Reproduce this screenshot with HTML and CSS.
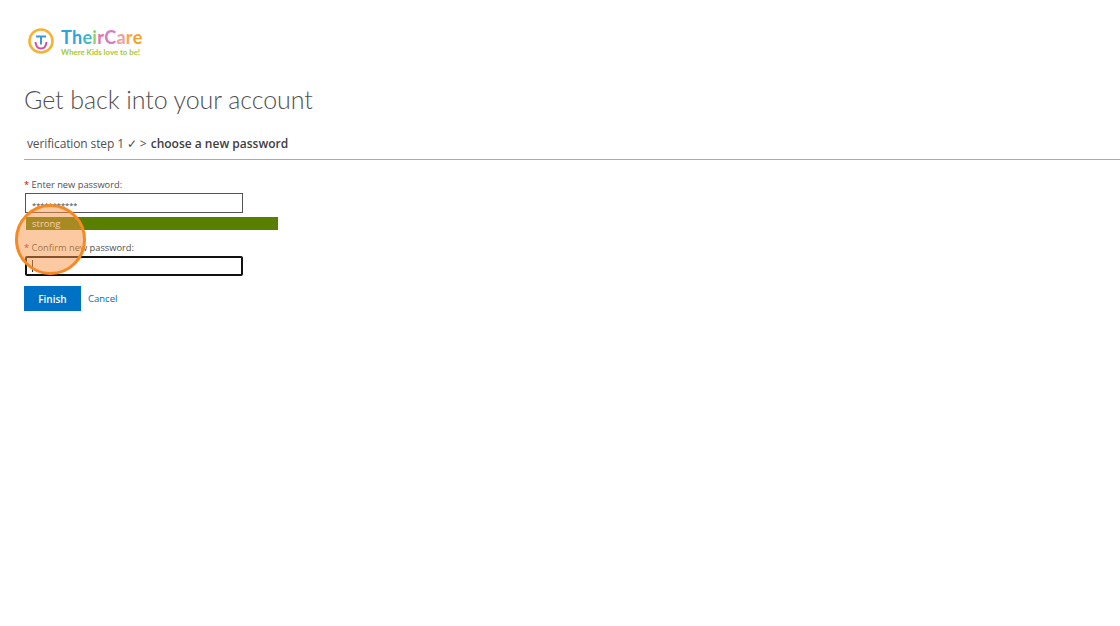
FILE: index.html
```html
<!DOCTYPE html>
<html lang="en">
<head>
    <meta charset="UTF-8">
    <title>Get back into your account</title>
    <link rel="stylesheet" href="styles.css">
</head>
<body>

<div class="container">
    <div class="logo">
        <svg class="logo-icon" width="28" height="28" viewBox="0 0 28 28">
            <circle cx="14" cy="14" r="11.5" fill="none" stroke="#f5b335" stroke-width="2.6"/>
            <path d="M9 9.500h10M14 9.500v8" fill="none" stroke="#3a9ad0" stroke-width="2"/>
            <path d="M8.500 15c.5 5 3 6.500 5.500 6.500s5-1.500 5.500-6.500" fill="none" stroke="#d24fa0" stroke-width="2"/>
        </svg>
        <div class="logo-text">
            <div class="logo-name"><span class="c1">Th</span><span class="c2">e</span><span class="c3">i</span><span class="c4">r</span><span class="c5">C</span><span class="c6">a</span><span class="c7">r</span><span class="c8">e</span></div>
            <div class="logo-tag">Where Kids love to be!</div>
        </div>
    </div>

    <h1 class="title">Get back into your account</h1>

    <div class="steps">
        <span class="step-done">verification step 1 ✓ &gt;</span> <b>choose a new password</b>
    </div>

    <form class="form">
        <label class="field-label" for="txtNew"><span class="req">*</span> Enter new password:</label>
        <div class="input fake-pass" id="txtNew">***********</div>
        <div class="strength">strong</div>

        <label class="field-label second" for="txtConfirm"><span class="req">*</span> Confirm new password:</label>
        <div class="input focused" id="txtConfirm"><i class="caret"></i></div>

        <div class="actions">
            <button type="button" class="btn-finish">Finish</button>
            <a class="cancel" href="#">Cancel</a>
        </div>
    </form>
</div>

<div class="highlight"></div>
</body>
</html>
```

FILE: styles.css
```css
html, body {
    margin: 0;
    background-color: #fff;
}
body {
    font-family: "Open Sans", "Noto Sans", sans-serif;
    color: #505050;
    height: 626px;
    overflow: hidden;
}
.container {
    padding: 25px 0 0 24px;
}

.logo {
    display: flex;
    align-items: center;
    height: 32px;
    padding-left: 3px;
    gap: 6px;
}
.logo-text {
    display: flex;
    flex-direction: column;
}
.logo-name {
    font-family: "Lato", sans-serif;
    font-size: 18px;
    font-weight: 700;
    line-height: 22px;
    letter-spacing: .3px;
}
.logo-tag {
    font-family: "Lato", sans-serif;
    font-size: 7.800px;
    font-weight: 700;
    line-height: 9px;
    color: #a5c93d;
}
.c1 { color: #2ba6dc; }
.c2 { color: #45b8c8; }
.c3 { color: #8fcf6a; }
.c4 { color: #e96fa8; }
.c5 { color: #d77cc0; }
.c6 { color: #f0a0a0; }
.c7 { color: #f5a94a; }
.c8 { color: #f5a12f; }

.title {
    margin: 25px 0 0;
    font-family: "Lato", sans-serif;
    font-size: 25px;
    font-weight: 300;
    line-height: 34px;
    letter-spacing: -.08px;
    color: #505050;
}

.steps {
    margin-top: 18px;
    padding: 0 0 6px 3px;
    height: 19px;
    line-height: 19px;
    font-size: 12px;
    border-bottom: 1px solid #aaa;
}
.step-done {
    letter-spacing: -.12px;
}
.steps b {
    font-weight: 600;
    color: #404040;
    margin-left: 1px;
}

.form {
    margin-top: 17px;
}
.field-label {
    display: block;
    height: 15px;
    line-height: 15px;
    font-size: 9.300px;
    color: #505050;
}
.second {
    margin-top: 10px;
}
.req {
    color: #c00;
}
.input {
    box-sizing: border-box;
    width: 218px;
    height: 20px;
    margin: 1px 0 0 1px;
    border: 1px solid #555;
    padding-left: 6px;
    font-size: 7.500px;
    line-height: 23px;
    color: #444;
}
.focused {
    border: 2px solid #111;
    border-radius: 2px;
    padding-left: 5px;
}
.caret {
    display: block;
    width: 1px;
    height: 12px;
    margin-top: 2px;
    background-color: #333;
}
.strength {
    box-sizing: border-box;
    width: 252px;
    height: 13px;
    margin: 4px 0 0 2px;
    padding-left: 6px;
    line-height: 14px;
    font-size: 9.500px;
    color: #fff;
    background-color: #587f00;
}

.actions {
    display: flex;
    align-items: center;
    margin-top: 10px;
    gap: 7px;
}
.btn-finish {
    width: 57px;
    height: 25px;
    padding: 0;
    border: 0;
    font-family: inherit;
    font-size: 10px;
    font-weight: 600;
    color: #fff;
    background-color: #0072c6;
}
.cancel {
    font-size: 9.500px;
    color: #006ea8;
    text-decoration: none;
}

/* click marker from the recording, sits over the form */
.highlight {
    position: absolute;
    left: 15px;
    top: 204px;
    width: 65px;
    height: 65px;
    border: 3px solid #f58a25;
    border-radius: 50%;
    background-color: rgba(247, 150, 70, .5);
}
```
